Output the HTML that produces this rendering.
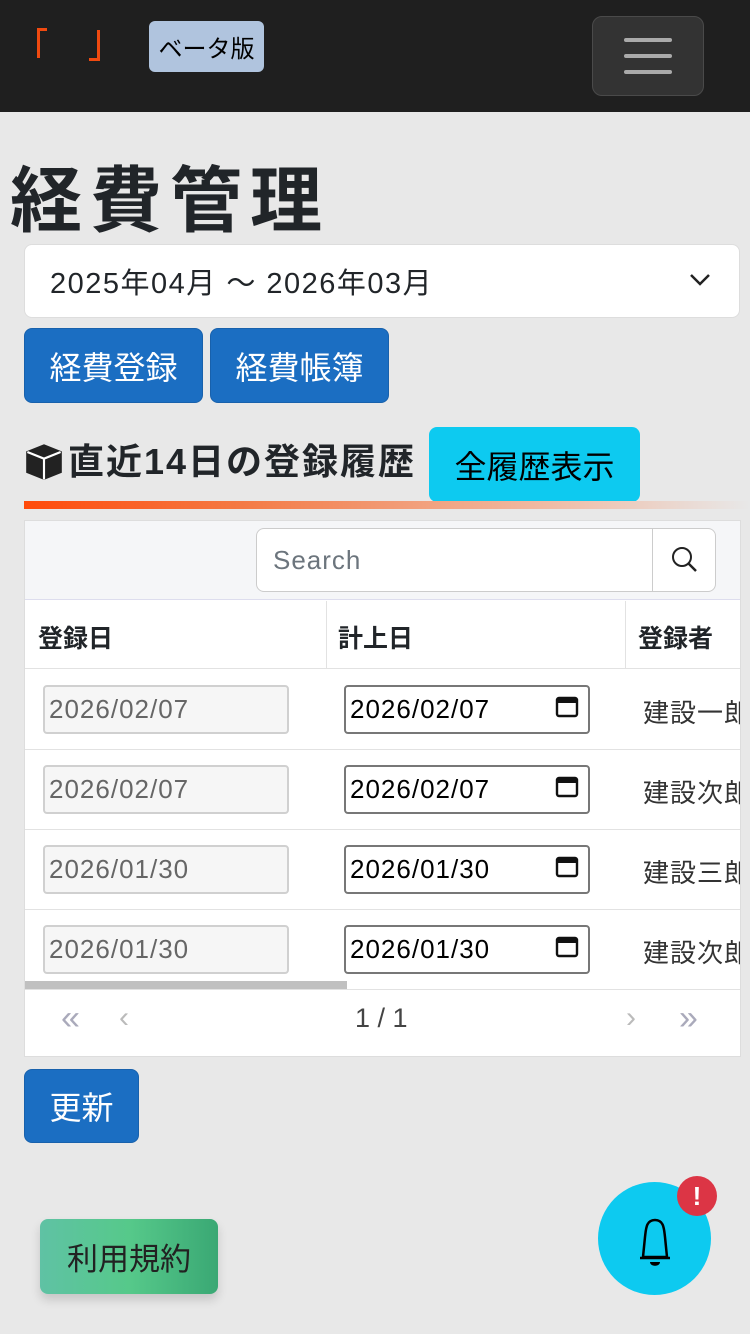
<!DOCTYPE html>
<html><head><meta charset="utf-8"><style>
*{box-sizing:border-box;margin:0;padding:0}
body{width:750px;height:1334px;background:#e8e8e8;font-family:"Liberation Sans","Noto Sans CJK JP",sans-serif;position:relative;overflow:hidden;color:#212529}
.abs{position:absolute}
.btn{position:absolute;border-radius:8px;display:flex;align-items:center;justify-content:center;font-size:32px}
.blue{background:#1b6ec2;color:#fff;border:1px solid #1861ac}
.inp{position:absolute;height:49px;width:246px;border-radius:4px;font-size:26px;padding-left:4px;display:flex;align-items:center;letter-spacing:1px}
.ro{background:#f6f6f6;border:2px solid #d0d0d0;color:#666}
.dt{background:#fff;border:2px solid #777;color:#000}
.name{position:absolute;left:618px;font-size:26px;color:#333;white-space:nowrap;letter-spacing:1px}
.rl{position:absolute;left:0;width:715px;height:1px;background:#e2e2e2}
</style></head><body>
<div class="abs" style="left:0;top:0;width:750px;height:112px;background:#1f1f1f"></div>
<div class="abs" style="left:37px;top:28px;width:3px;height:30px;background:#f04a10"></div>
<div class="abs" style="left:37px;top:28px;width:10px;height:3px;background:#f04a10"></div>
<div class="abs" style="left:97px;top:30px;width:3px;height:31px;background:#f04a10"></div>
<div class="abs" style="left:89px;top:58px;width:11px;height:3px;background:#f04a10"></div>
<div class="abs" style="left:149px;top:21px;width:115px;height:51px;background:#b0c4de;border-radius:6px;font-size:24px;display:flex;align-items:center;justify-content:center;color:#000">ベータ版</div>
<div class="abs" style="left:592px;top:16px;width:112px;height:80px;background:#333;border:1px solid #4a4a4a;border-radius:10px"></div>
<div class="abs" style="left:624px;top:38px;width:48px;height:4px;background:#aaa;border-radius:2px"></div>
<div class="abs" style="left:624px;top:54px;width:48px;height:4px;background:#aaa;border-radius:2px"></div>
<div class="abs" style="left:624px;top:70px;width:48px;height:4px;background:#aaa;border-radius:2px"></div>

<div class="abs" style="left:10px;top:152px;font-size:72px;font-weight:bold;line-height:100px;letter-spacing:8px">経費管理</div>
<div class="abs" style="left:24px;top:244px;width:716px;height:74px;background:#fff;border:1px solid #ddd;border-radius:8px;font-size:29px;padding-left:25px;display:flex;align-items:center;letter-spacing:1.5px">2025年04月 ～ 2026年03月</div>
<svg class="abs" style="left:688px;top:270px" width="24" height="20"><path d="M3 5 L12 14 L21 5" stroke="#222" stroke-width="2.5" fill="none"/></svg>
<div class="btn blue" style="left:24px;top:328px;width:179px;height:75px">経費登録</div>
<div class="btn blue" style="left:210px;top:328px;width:179px;height:75px">経費帳簿</div>

<svg class="abs" style="left:24px;top:443px" width="40" height="38" viewBox="0 0 16 16"><path fill="#222" d="M8 0.5 L15.5 3.5 V12.5 L8 15.5 L0.5 12.5 V3.5Z"/><path d="M1 3.8 L8 6.6 L15 3.8 M8 6.6 V15.3" stroke="#fff" stroke-width="0.9" fill="none"/></svg>
<div class="abs" style="left:68px;top:438px;font-size:36px;font-weight:bold;line-height:48px;letter-spacing:2px">直近14日の登録履歴</div>
<div class="btn" style="left:429px;top:427px;width:211px;height:75px;background:#0dcaf0;color:#000">全履歴表示</div>
<div class="abs" style="left:24px;top:501px;width:726px;height:8px;background:linear-gradient(90deg,#ff4a0a,#f47a45 30%,#f0b8a0 70%,#e8e8e8)"></div>

<div class="abs" style="left:24px;top:520px;width:717px;height:537px;background:#fff;border:1px solid #ddd;overflow:hidden">
<div class="abs" style="left:0;top:0;width:715px;height:79px;background:#f5f6f8;border-bottom:1px solid #dde"></div>
<div class="abs" style="left:231px;top:7px;width:460px;height:64px;background:#fff;border:1px solid #ccc;border-radius:8px"></div>
<div class="abs" style="left:627px;top:8px;width:1px;height:62px;background:#ccc"></div>
<div class="abs" style="left:248px;top:24px;font-size:26px;color:#6c757d;letter-spacing:1px">Search</div>
<svg class="abs" style="left:644px;top:23px" width="32" height="32"><circle cx="13" cy="13" r="9" stroke="#222" stroke-width="2" fill="none"/><path d="M19.5 19.5 L27 27" stroke="#222" stroke-width="2.5"/></svg>
<div class="abs" style="left:301px;top:80px;width:1px;height:68px;background:#e2e2e2"></div>
<div class="abs" style="left:600px;top:80px;width:1px;height:68px;background:#e2e2e2"></div>
<div class="abs" style="left:13px;top:98px;font-size:25px;font-weight:bold">登録日</div>
<div class="abs" style="left:313px;top:98px;font-size:25px;font-weight:bold">計上日</div>
<div class="abs" style="left:613px;top:98px;font-size:25px;font-weight:bold">登録者</div>
<div class="rl" style="top:147px"></div><div class="rl" style="top:228px"></div><div class="rl" style="top:308px"></div><div class="rl" style="top:388px"></div><div class="rl" style="top:468px"></div>
<div class="inp ro" style="left:18px;top:164px">2026/02/07</div><div class="inp dt" style="left:319px;top:164px">2026/02/07</div><div class="name" style="top:172px">建設一郎</div>
<div class="inp ro" style="left:18px;top:244px">2026/02/07</div><div class="inp dt" style="left:319px;top:244px">2026/02/07</div><div class="name" style="top:252px">建設次郎</div>
<div class="inp ro" style="left:18px;top:324px">2026/01/30</div><div class="inp dt" style="left:319px;top:324px">2026/01/30</div><div class="name" style="top:332px">建設三郎</div>
<div class="inp ro" style="left:18px;top:404px">2026/01/30</div><div class="inp dt" style="left:319px;top:404px">2026/01/30</div><div class="name" style="top:412px">建設次郎</div>
<svg class="abs" style="left:530px;top:173px" width="26" height="270"><g fill="none" stroke="#111" stroke-width="2.4"><rect x="2" y="4" width="20" height="18" rx="2"/><rect x="2" y="84" width="20" height="18" rx="2"/><rect x="2" y="164" width="20" height="18" rx="2"/><rect x="2" y="244" width="20" height="18" rx="2"/></g><g fill="#111"><rect x="2" y="4" width="20" height="5"/><rect x="2" y="84" width="20" height="5"/><rect x="2" y="164" width="20" height="5"/><rect x="2" y="244" width="20" height="5"/></g></svg>
<div class="abs" style="left:0;top:460px;width:322px;height:8px;background:#c0c0c0"></div>
<div class="abs" style="left:36px;top:478px;font-size:34px;color:#aab">«</div>
<div class="abs" style="left:94px;top:480px;font-size:30px;color:#bbb">‹</div>
<div class="abs" style="left:330px;top:482px;font-size:27px;color:#444">1 / 1</div>
<div class="abs" style="left:601px;top:480px;font-size:30px;color:#bbb">›</div>
<div class="abs" style="left:654px;top:478px;font-size:34px;color:#aab">»</div>
</div>

<div class="btn blue" style="left:24px;top:1069px;width:115px;height:74px">更新</div>
<div class="btn" style="left:40px;top:1219px;width:178px;height:75px;background:linear-gradient(90deg,#5fc2a4,#56c98a 50%,#3aa874);color:#222;box-shadow:0 6px 10px rgba(0,0,0,.15);font-size:31px">利用規約</div>
<div class="abs" style="left:598px;top:1182px;width:113px;height:113px;border-radius:50%;background:#0dcaf0"></div>
<svg class="abs" style="left:630px;top:1215px" width="50" height="56"><path d="M25 5 C16 5 16 14 15 22 L13 42 H37 L35 22 C34 14 34 5 25 5Z M10 43 H40" stroke="#000" stroke-width="2.5" fill="none"/><path d="M20 47 H30 C30 52 20 52 20 47Z" fill="#000"/></svg>
<div class="abs" style="left:677px;top:1176px;width:40px;height:40px;border-radius:50%;background:#dc3545;color:#fff;font-weight:bold;font-size:26px;display:flex;align-items:center;justify-content:center">!</div>
</body></html>
